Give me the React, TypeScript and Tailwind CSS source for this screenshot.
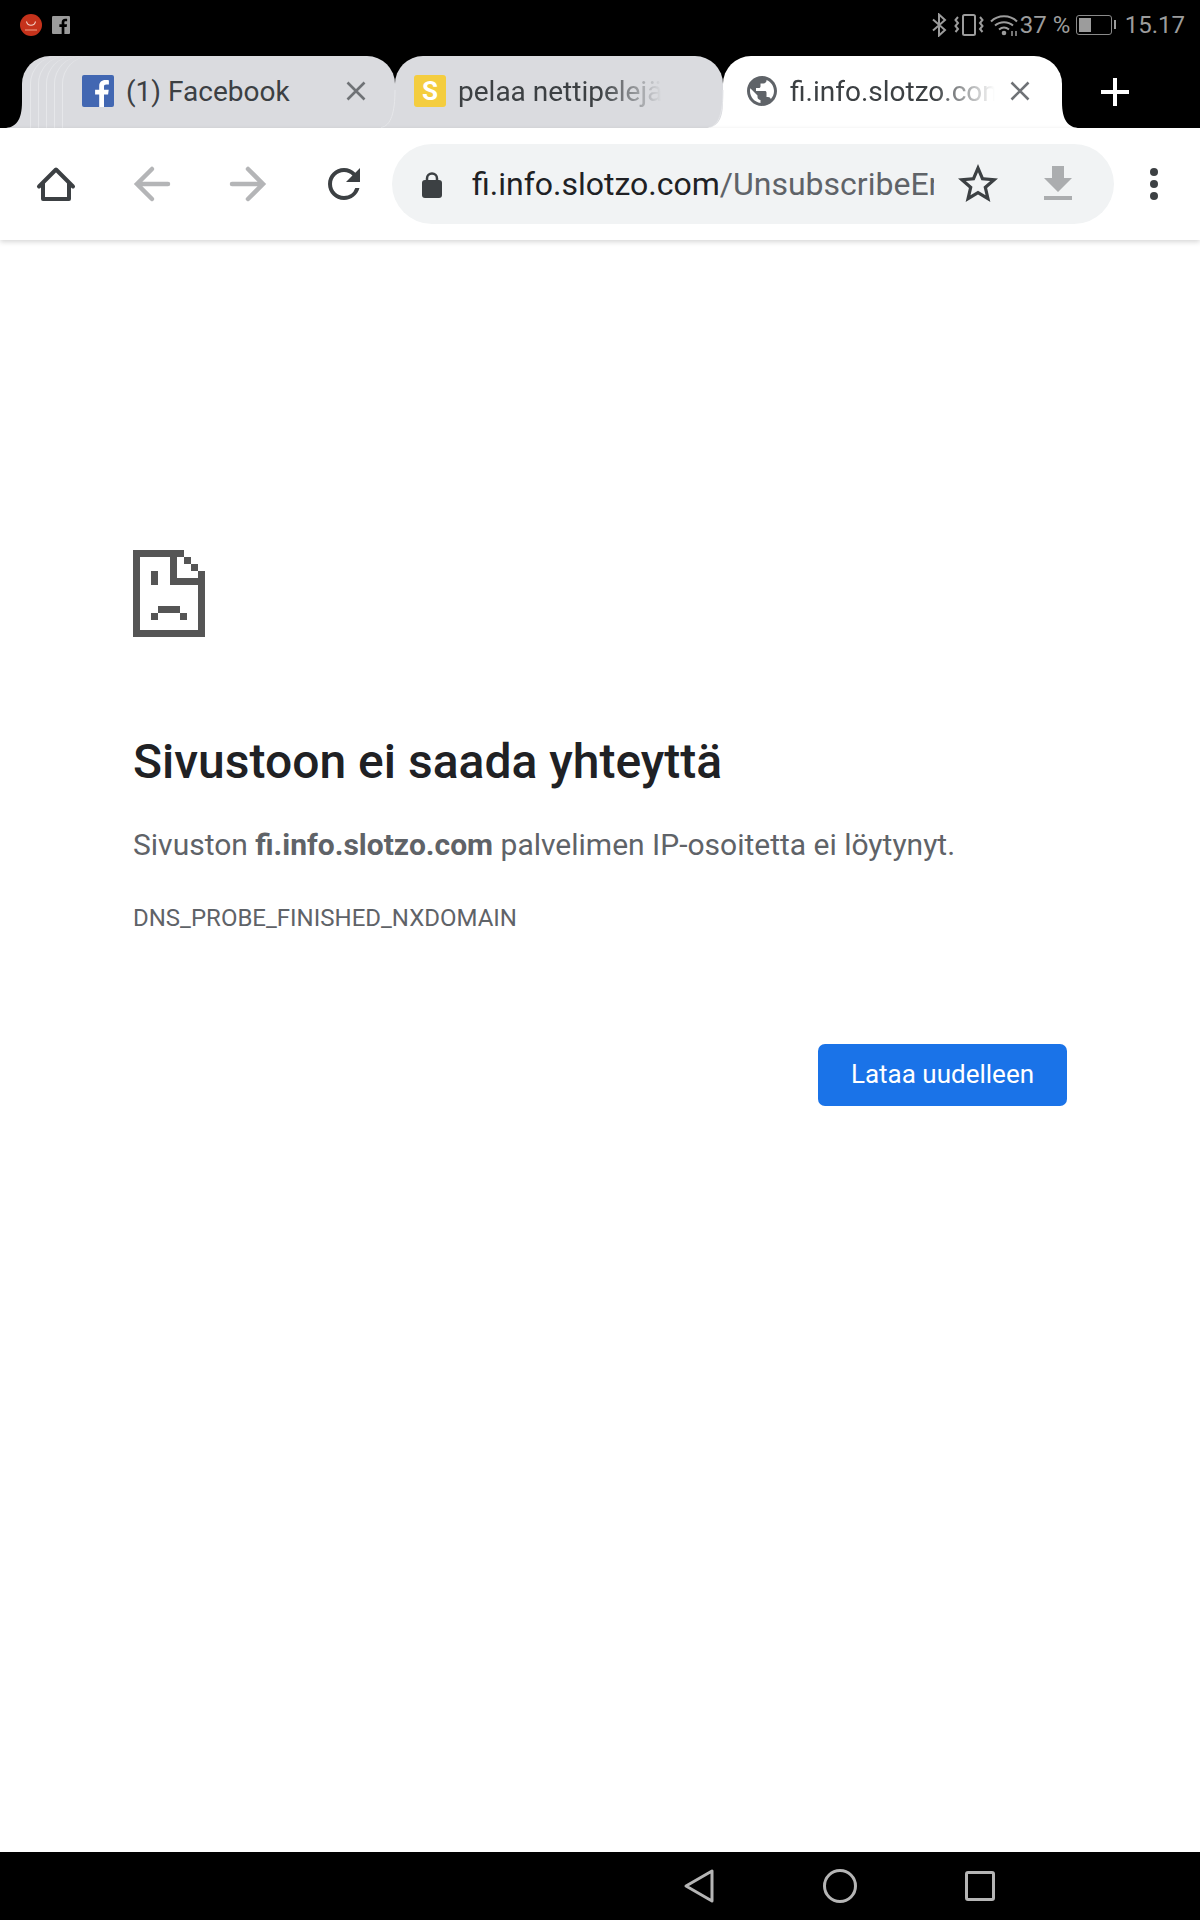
const gray = "#b4b5b7";

function Flare({ side, color }: { side: "left" | "right"; color: string }) {
  // concave corner where a tab meets the toolbar
  if (side === "left") {
    return (
      <svg className="absolute bottom-0 left-[-18px] z-10" width="18" height="26" viewBox="0 0 18 26">
        <path d="M18 0V26H0C12 26 18 18 18 0Z" fill={color} />
      </svg>
    );
  }
  return (
    <svg className="absolute bottom-0 right-[-18px] z-10" width="18" height="26" viewBox="0 0 18 26">
      <path d="M0 0V26H18C6 26 0 18 0 0Z" fill={color} />
    </svg>
  );
}

function TabEdge() {
  // thin curved line of the tab lying underneath
  return (
    <svg className="absolute bottom-0 left-[-14px] z-10" width="15" height="38" viewBox="0 0 15 38">
      <path d="M14 0C14 22 10 36 0 37.500" stroke="#e6e7ea" strokeWidth="1" fill="none" />
    </svg>
  );
}

function CloseX() {
  return (
    <svg width="20" height="20" viewBox="0 0 20 20" className="shrink-0">
      <path d="M1.500 1.500L18.500 18.500M18.500 1.500L1.500 18.500" stroke="#6f7276" strokeWidth="2.600" fill="none" />
    </svg>
  );
}

function FacebookTile({ size, bg, fg }: { size: number; bg: string; fg: string }) {
  return (
    <svg width={size} height={size} viewBox="0 0 32 32" className="shrink-0">
      <rect width="32" height="32" rx="2" fill={bg} />
      <path
        d="M22 32V19.600h4.100l.6-4.800H22v-3c0-1.400.4-2.300 2.400-2.300h2.500V5.200c-.4-.1-1.900-.2-3.600-.2-3.600 0-6.100 2.200-6.100 6.300v3.500h-4.100v4.800h4.100V32H22Z"
        fill={fg}
      />
    </svg>
  );
}

function StatusBar() {
  return (
    <div className="flex h-14 items-center justify-between bg-black pr-[15px] pb-[7px] pl-[20px]">
      <div className="flex items-center gap-[10px]">
        <svg width="22" height="22" viewBox="0 0 22 22">
          <circle cx="11" cy="11" r="11" fill="#c5321b" />
          <path d="M6.500 7.500C7.500 12.500 14.500 12.500 15.500 7.500" stroke="#f4d6cc" strokeWidth="1.200" fill="none" />
          <path d="M5 16H17" stroke="#e88d76" strokeWidth="1.200" />
        </svg>
        <FacebookTile size={18} bg="#9b9b9b" fg="#000000" />
      </div>
      <div className="flex items-center text-[24px] leading-none text-[#9c9c9c]">
        <svg width="16" height="24" viewBox="0 0 16 24" className="mr-[7px]">
          <path d="M2 6.500L14 17L8 22.500V1.500L14 7L2 17.500" stroke="#9c9c9c" strokeWidth="2" fill="none" />
        </svg>
        <svg width="30" height="24" viewBox="0 0 30 24" className="mr-[6px]">
          <rect x="9" y="2" width="12" height="20" rx="1.500" stroke="#9c9c9c" strokeWidth="2" fill="none" />
          <path d="M4 4L1.500 7L4 10L1.500 13L4 16L1.500 19M26 4L28.500 7L26 10L28.500 13L26 16L28.500 19" stroke="#9c9c9c" strokeWidth="2" fill="none" />
        </svg>
        <svg width="28" height="24" viewBox="0 0 28 24">
          <path d="M1 8.500C8 1.500 20 1.500 27 8.500M5 12.500C10 8 18 8 23 12.500M9 16.500C12 14 16 14 19 16.500" stroke="#9c9c9c" strokeWidth="2" fill="none" />
          <circle cx="14" cy="20" r="2.300" fill="#9c9c9c" />
          <path d="M22 18V23M26 18V23" stroke="#9c9c9c" strokeWidth="1.500" />
        </svg>
        <span className="ml-[2px] w-[56px] whitespace-nowrap">37 %</span>
        <div className="flex items-center">
          <div className="h-[20px] w-[36px] rounded-[3px] border border-[#8a8a8a] p-[2px]">
            <div className="h-full w-[12px] bg-[#9c9c9c]" />
          </div>
          <div className="ml-[2px] h-[9px] w-[2px] bg-[#9c9c9c]" />
        </div>
        <span className="ml-[9px]">15.17</span>
      </div>
    </div>
  );
}

function TabRow() {
  return (
    <div className="flex h-[72px] bg-black pl-[22px]">
      {/* facebook tab, with the stacked tabs peeking out behind it */}
      <div className="relative h-full w-[373px] rounded-t-[28px] bg-[#dadbdf]">
        <Flare side="left" color="#dadbdf" />
        <div className="absolute inset-y-0 left-[8px] w-[30px] rounded-tl-[28px] border-l border-[#e6e7ea]" />
        <div className="absolute inset-y-0 left-[16px] w-[30px] rounded-tl-[28px] border-l border-[#e6e7ea]" />
        <div className="absolute inset-y-0 left-[24px] w-[30px] rounded-tl-[28px] border-l border-[#e6e7ea]" />
        <div className="absolute inset-y-0 left-[32px] w-[30px] rounded-tl-[28px] border-l border-[#e6e7ea]" />
        <div className="absolute inset-y-0 left-[40px] w-[30px] rounded-tl-[28px] border-l border-[#e6e7ea]" />
        <div className="relative flex h-full items-center pb-[2px] pl-[60px]">
          <FacebookTile size={32} bg="#4267b2" fg="#ffffff" />
          <span className="mt-[2px] ml-[12px] w-[220px] text-[28px] whitespace-nowrap text-[#3c4043]">(1) Facebook</span>
          <CloseX />
        </div>
      </div>

      <div className="relative h-full w-[328px] rounded-t-[28px] bg-[#dadbdf]">
        <TabEdge />
        <div className="flex h-full items-center pb-[2px] pl-[19px]">
          <div className="flex h-8 w-8 shrink-0 items-center justify-center rounded-[3px] bg-[#f4cd3f] text-[26px] font-bold text-white">
            S
          </div>
          <span className="mt-[2px] ml-[12px] w-[204px] overflow-hidden text-[28px] whitespace-nowrap text-[#3c4043] [mask-image:linear-gradient(to_right,black_70%,transparent)]">
            pelaa nettipelejä
          </span>
        </div>
      </div>

      {/* active tab */}
      <div className="relative h-full w-[339px] rounded-t-[28px] bg-white">
        <TabEdge />
        <Flare side="left" color="#ffffff" />
        <Flare side="right" color="#ffffff" />
        <div className="flex h-full items-center pb-[2px] pl-[21px]">
          <svg width="36" height="36" viewBox="0 0 24 24" className="shrink-0">
            <path
              d="M12 2C6.480 2 2 6.480 2 12s4.480 10 10 10 10-4.480 10-10S17.520 2 12 2zm-1 17.930c-3.950-.49-7-3.850-7-7.930 0-.62.08-1.210.21-1.790L9 15v1c0 1.100.9 2 2 2v1.930zm6.900-2.540c-.26-.81-1-1.390-1.900-1.390h-1v-3c0-.55-.45-1-1-1H8v-2h2c.55 0 1-.45 1-1V7h2c1.100 0 2-.9 2-2v-.41c2.930 1.190 5 4.060 5 7.410 0 2.080-.8 3.970-2.100 5.390z"
              fill="#5f6368"
            />
          </svg>
          <span className="mt-[2px] ml-[10px] w-[205px] overflow-hidden text-[28px] whitespace-nowrap text-[#3c4043] [mask-image:linear-gradient(to_right,black_70%,transparent)]">
            fi.info.slotzo.com
          </span>
          <span className="ml-[15px]">
            <CloseX />
          </span>
        </div>
      </div>

      <div className="ml-[39px] flex h-full items-center">
        <svg width="28" height="28" viewBox="0 0 28 28">
          <path d="M14 0V28M0 14H28" stroke="#ffffff" strokeWidth="4" />
        </svg>
      </div>
    </div>
  );
}

function Toolbar() {
  return (
    <div className="relative z-20 flex h-[112px] items-center bg-white pl-[32px] shadow-[0_2px_5px_rgba(0,0,0,0.16)]">
      <div className="flex gap-12">
        <svg width="48" height="48" viewBox="0 0 48 48">
          <path d="M7 26.500L24 9.500L41 26.500M11 23V39H37V23" stroke="#3c4043" strokeWidth="4" strokeLinejoin="round" strokeLinecap="round" fill="none" />
        </svg>
        <svg width="48" height="48" viewBox="0 0 48 48">
          <path d="M40 24H10M24 9L9 24L24 39" stroke={gray} strokeWidth="4.500" fill="none" strokeLinecap="round" />
        </svg>
        <svg width="48" height="48" viewBox="0 0 48 48">
          <path d="M8 24H38M24 9L39 24L24 39" stroke={gray} strokeWidth="4.500" fill="none" strokeLinecap="round" />
        </svg>
        <svg width="48" height="48" viewBox="0 0 24 24">
          <path
            d="M17.650 6.350A7.958 7.958 0 0 0 12 4c-4.420 0-7.990 3.580-7.990 8s3.570 8 7.990 8c3.730 0 6.840-2.550 7.730-6h-2.080A5.990 5.990 0 0 1 12 18c-3.310 0-6-2.690-6-6s2.690-6 6-6c1.660 0 3.140.69 4.220 1.780L13 11h7V4l-2.350 2.350z"
            fill="#3c4043"
          />
        </svg>
      </div>

      <div className="ml-[24px] flex h-20 w-[722px] items-center rounded-full bg-[#f1f3f4] pl-[30px]">
        <svg width="20" height="27" viewBox="0 0 20 27" className="shrink-0">
          <path d="M5 11V7.500a5 5 0 0 1 10 0V11" stroke="#3c4043" strokeWidth="2.500" fill="none" />
          <rect y="9" width="20" height="18" rx="3" fill="#3c4043" />
        </svg>
        <div className="ml-[30px] w-[462px] overflow-hidden text-[32px] whitespace-nowrap text-[#5f6368]">
          <span className="text-[#202124]">fi.info.slotzo.com</span>/UnsubscribeError
        </div>
        <svg width="48" height="48" viewBox="0 0 24 24" className="ml-[20px] shrink-0">
          <path
            d="M22 9.240l-7.190-.62L12 2 9.190 8.630 2 9.240l5.460 4.730L5.820 21 12 17.270 18.180 21l-1.630-7.030L22 9.240zM12 15.400l-3.760 2.270 1-4.280-3.320-2.880 4.380-.38L12 6.100l1.710 4.040 4.380.38-3.320 2.880 1 4.280L12 15.400z"
            fill="#3c4043"
          />
        </svg>
        <svg width="48" height="48" viewBox="0 0 24 24" className="ml-[32px] shrink-0">
          <path d="M19 9h-4V3H9v6H5l7 7 7-7zM5 18v2h14v-2H5z" fill="#abadaf" />
        </svg>
      </div>

      <div className="ml-[36px] flex flex-col gap-[4px]">
        <div className="h-2 w-2 rounded-full bg-[#3c4043]" />
        <div className="h-2 w-2 rounded-full bg-[#3c4043]" />
        <div className="h-2 w-2 rounded-full bg-[#3c4043]" />
      </div>
    </div>
  );
}

function SadPage() {
  // pixel-art page icon, coordinates taken on a 3x grid
  return (
    <svg width="72" height="87" viewBox="69 60 216 261" shapeRendering="crispEdges">
      <g fill="#555555">
        <rect x="69" y="60" width="153" height="21" />
        <rect x="69" y="60" width="21" height="261" />
        <rect x="69" y="300" width="216" height="21" />
        <rect x="264" y="124" width="21" height="197" />
        <rect x="222" y="81" width="21" height="22" />
        <rect x="243" y="103" width="21" height="21" />
        <rect x="180" y="81" width="21" height="84" />
        <rect x="180" y="145" width="105" height="20" />
        <rect x="123" y="124" width="22" height="41" />
        <rect x="145" y="228" width="65" height="21" />
        <rect x="123" y="249" width="22" height="21" />
        <rect x="210" y="249" width="22" height="21" />
      </g>
    </svg>
  );
}

function NavBar() {
  return (
    <div className="flex h-[68px] items-center justify-end gap-[108px] bg-black pr-[205px]">
      <svg width="32" height="36" viewBox="0 0 32 36">
        <path d="M3 18L29 3V33Z" stroke="#b5b5b5" strokeWidth="3" fill="none" strokeLinejoin="round" />
      </svg>
      <svg width="34" height="34" viewBox="0 0 34 34">
        <circle cx="17" cy="17" r="15.500" stroke="#b5b5b5" strokeWidth="3" fill="none" />
      </svg>
      <svg width="30" height="30" viewBox="0 0 30 30">
        <rect x="1.500" y="1.500" width="27" height="27" rx="1.500" stroke="#b5b5b5" strokeWidth="3" fill="none" />
      </svg>
    </div>
  );
}

export default function App() {
  return (
    <div className="flex h-[1920px] flex-col overflow-hidden bg-white font-[Roboto,sans-serif]">
      <StatusBar />
      <TabRow />
      <Toolbar />
      <main className="flex-1 px-[133px] pt-[310px]">
        <SadPage />
        <h1 className="mt-[95px] text-[48px] leading-[60px] font-medium text-[#202124]">Sivustoon ei saada yhteyttä</h1>
        <p className="mt-[33px] text-[30px] leading-[40px] text-[#5f6368]">
          Sivuston <strong className="font-bold">fi.info.slotzo.com</strong> palvelimen IP-osoitetta ei löytynyt.
        </p>
        <p className="mt-[38px] text-[24px] leading-[30px] text-[#5f6368]">DNS_PROBE_FINISHED_NXDOMAIN</p>
        <div className="mt-[111px] flex justify-end">
          <button className="h-[62px] w-[249px] rounded-[7px] bg-[#1a73e8] pb-[2px] text-[26px] text-white">
            Lataa uudelleen
          </button>
        </div>
      </main>
      <NavBar />
    </div>
  );
}
